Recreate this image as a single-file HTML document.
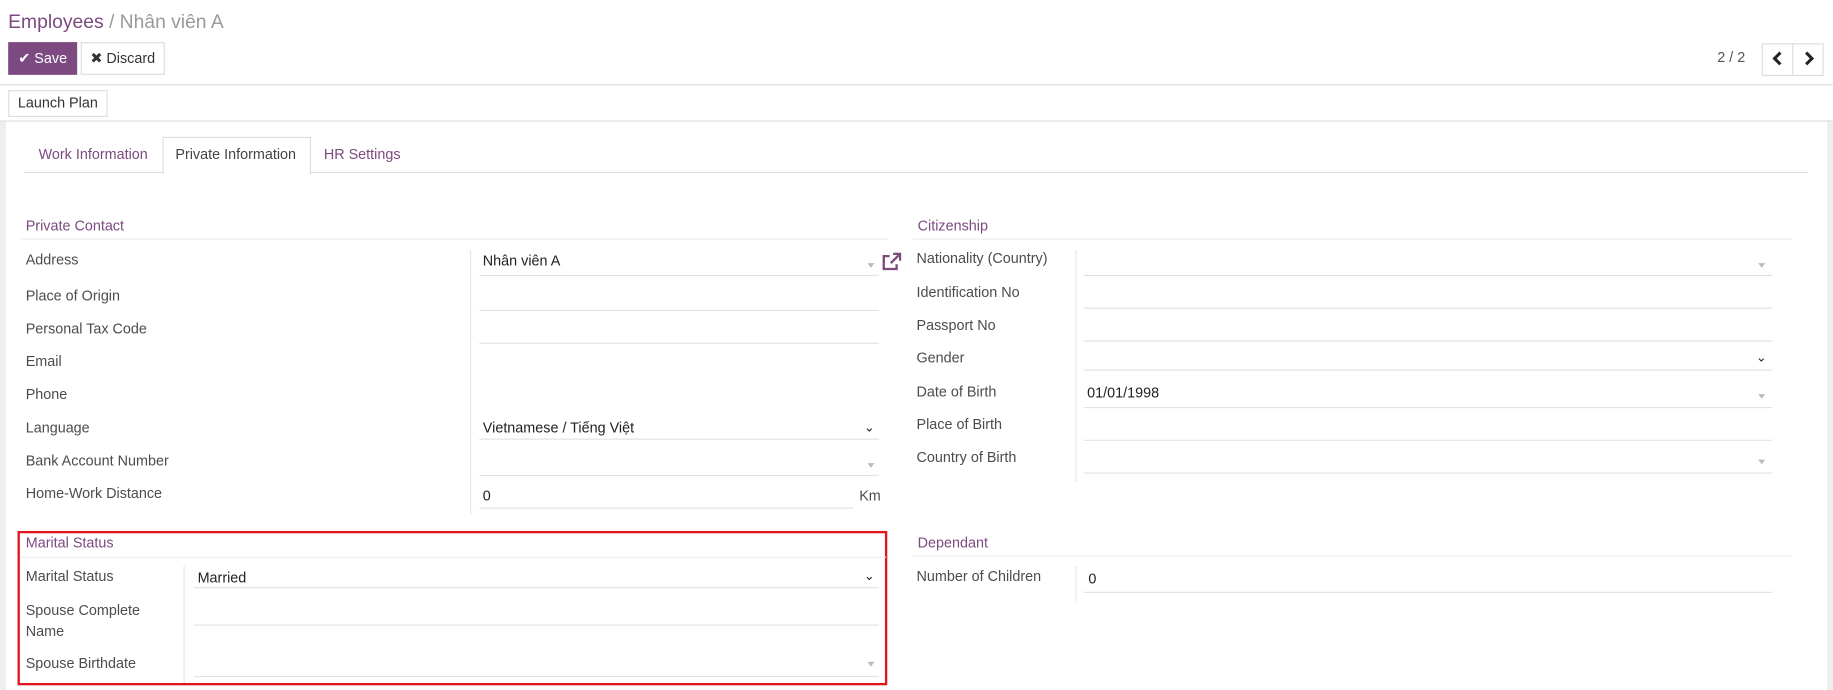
<!DOCTYPE html>
<html><head><meta charset="utf-8"><style>
html,body{margin:0;padding:0;background:#fff;overflow:hidden;width:1833px;height:690px}
#w{position:absolute;left:0;top:0;width:1568px;height:590px;transform:scale(1.16901,1.16949);transform-origin:0 0;font-family:"Liberation Sans",sans-serif;font-size:12.3px;color:#4c4c4c}
#w div{position:absolute}
.t{line-height:16px;height:16px;white-space:nowrap}
.p{color:#7c4a80}
.ln{height:1px;background:#e3e3e3}
.vs{width:1px;background:#e6e6e6}
.h{color:#7c4a80}
.c{color:#222}
.dd{width:0;height:0;border-left:3px solid transparent;border-right:3px solid transparent;border-top:4px solid #bbb}
</style></head><body><div id="w">
<div class="t" style="left:7px;top:9px;font-size:16.5px;line-height:20px;height:20px"><span class="p">Employees</span><span style="color:#999"> / Nhân viên A</span></div>
<div style="left:7px;top:36px;width:59px;height:28px;background:#7c4a80;color:#fff;line-height:28px;text-align:center">✔ Save</div>
<div style="left:69px;top:36px;width:70px;height:26px;border:1px solid #ddd;line-height:26px;text-align:center;color:#333">✖ Discard</div>
<div class="t" style="left:1469px;top:41px;color:#555">2 / 2</div>
<div style="left:1507px;top:37px;width:51px;height:26px;border:1px solid #ddd"></div>
<div style="left:1533px;top:37px;width:1px;height:27px;background:#ddd"></div>
<svg style="position:absolute;left:1516px;top:44px" width="10" height="12" viewBox="0 0 10 12"><path d="M7 1L2 6l5 5" fill="none" stroke="#222" stroke-width="2.6"/></svg>
<svg style="position:absolute;left:1542px;top:44px" width="10" height="12" viewBox="0 0 10 12"><path d="M3 1l5 5-5 5" fill="none" stroke="#222" stroke-width="2.6"/></svg>
<div class="ln" style="left:0;top:72px;width:1568px;background:#ddd"></div>
<div style="left:7px;top:77px;width:83px;height:21px;border:1px solid #ddd;line-height:21px;text-align:center;color:#333">Launch Plan</div>
<div class="ln" style="left:0;top:103px;width:1568px;background:#ddd"></div>
<div style="left:0;top:104px;width:5px;height:486px;background:#eee"></div>
<div style="left:1563px;top:104px;width:5px;height:486px;background:#eee"></div>
<div class="ln" style="left:21px;top:147px;width:1526px;background:#ddd"></div>
<div style="left:139px;top:117px;width:125px;height:31px;border:1px solid #ddd;border-bottom:none;background:#fff"></div>
<div class="t p" style="left:33px;top:124px">Work Information</div>
<div class="t" style="left:150px;top:124px;color:#444">Private Information</div>
<div class="t p" style="left:277px;top:124px">HR Settings</div>

<div class="t h" style="left:22px;top:185px">Private Contact</div>
<div class="ln" style="left:18px;top:204px;width:742px;background:#eee"></div>
<div class="t" style="left:22px;top:214px">Address</div>
<div class="t" style="left:22px;top:245px">Place of Origin</div>
<div class="t" style="left:22px;top:273px">Personal Tax Code</div>
<div class="t" style="left:22px;top:301px">Email</div>
<div class="t" style="left:22px;top:329px">Phone</div>
<div class="t" style="left:22px;top:358px">Language</div>
<div class="t" style="left:22px;top:386px">Bank Account Number</div>
<div class="t" style="left:22px;top:414px">Home-Work Distance</div>
<div class="vs" style="left:402px;top:214px;height:226px"></div>
<div class="t c" style="left:413px;top:215px">Nhân viên A</div>
<div class="dd" style="left:742px;top:225px"></div>
<svg style="position:absolute;left:754px;top:216px" width="17" height="16" viewBox="0 0 17 16"><path d="M10 1h6v6M16 1l-8 8M13 10v4H2V3h5" fill="none" stroke="#7c4a80" stroke-width="2"/></svg>
<div class="ln" style="left:410px;top:235px;width:342px"></div>
<div class="ln" style="left:410px;top:265px;width:342px"></div>
<div class="ln" style="left:410px;top:293px;width:342px"></div>
<div class="t c" style="left:413px;top:358px">Vietnamese / Tiếng Việt</div>
<div class="t c" style="left:739px;top:358px;font-size:11px">&#8964;</div>
<div class="ln" style="left:410px;top:375px;width:342px"></div>
<div class="dd" style="left:742px;top:396px"></div>
<div class="ln" style="left:410px;top:406px;width:342px"></div>
<div class="t c" style="left:413px;top:416px">0</div>
<div class="t" style="left:735px;top:416px">Km</div>
<div class="ln" style="left:410px;top:434px;width:320px"></div>

<div class="t h" style="left:785px;top:185px">Citizenship</div>
<div class="ln" style="left:781px;top:204px;width:752px;background:#eee"></div>
<div class="vs" style="left:920px;top:214px;height:198px"></div>
<div class="t" style="left:784px;top:213px">Nationality (Country)</div>
<div class="t" style="left:784px;top:242px">Identification No</div>
<div class="t" style="left:784px;top:270px">Passport No</div>
<div class="t" style="left:784px;top:298px">Gender</div>
<div class="t" style="left:784px;top:327px">Date of Birth</div>
<div class="t" style="left:784px;top:355px">Place of Birth</div>
<div class="t" style="left:784px;top:383px">Country of Birth</div>
<div class="dd" style="left:1504px;top:225px"></div>
<div class="ln" style="left:927px;top:235px;width:589px"></div>
<div class="ln" style="left:927px;top:263px;width:589px"></div>
<div class="ln" style="left:927px;top:291px;width:589px"></div>
<div class="t c" style="left:1502px;top:298px;font-size:11px">&#8964;</div>
<div class="ln" style="left:927px;top:316px;width:589px"></div>
<div class="t c" style="left:930px;top:328px">01/01/1998</div>
<div class="dd" style="left:1504px;top:337px"></div>
<div class="ln" style="left:927px;top:348px;width:589px"></div>
<div class="ln" style="left:927px;top:376px;width:589px"></div>
<div class="dd" style="left:1504px;top:393px"></div>
<div class="ln" style="left:927px;top:404px;width:589px"></div>

<div style="left:15px;top:454px;width:740px;height:128px;border:2px solid #e0151d"></div>
<div class="t h" style="left:22px;top:456px">Marital Status</div>
<div class="ln" style="left:18px;top:476px;width:740px;background:#eee"></div>
<div class="vs" style="left:157px;top:484px;height:100px"></div>
<div class="t" style="left:22px;top:485px">Marital Status</div>
<div class="t" style="left:22px;top:514px">Spouse Complete</div>
<div class="t" style="left:22px;top:532px">Name</div>
<div class="t" style="left:22px;top:559px">Spouse Birthdate</div>
<div class="t c" style="left:169px;top:486px">Married</div>
<div class="t c" style="left:739px;top:485px;font-size:11px">&#8964;</div>
<div class="ln" style="left:166px;top:502px;width:586px"></div>
<div class="ln" style="left:166px;top:534px;width:586px"></div>
<div class="dd" style="left:742px;top:566px"></div>
<div class="ln" style="left:166px;top:578px;width:586px"></div>

<div class="t h" style="left:785px;top:456px">Dependant</div>
<div class="ln" style="left:781px;top:475px;width:752px;background:#eee"></div>
<div class="vs" style="left:920px;top:484px;height:30px"></div>
<div class="t" style="left:784px;top:485px">Number of Children</div>
<div class="t c" style="left:931px;top:487px">0</div>
<div class="ln" style="left:927px;top:506px;width:589px"></div>
</div></body></html>
